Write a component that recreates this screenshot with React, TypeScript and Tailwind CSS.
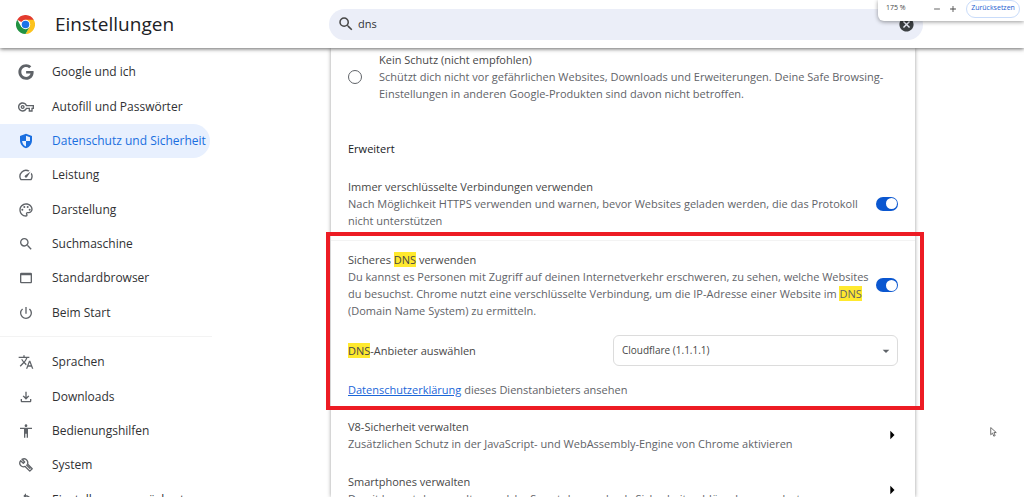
import type { ComponentType, ReactNode } from "react";
import clsx from "clsx";
import { FaGoogle } from "react-icons/fa";
import {
  MdAccessibility,
  MdAdd,
  MdArrowDropDown,
  MdArrowRight,
  MdCancel,
  MdOutlineFileDownload,
  MdOutlinePalette,
  MdOutlineSpeed,
  MdOutlineVpnKey,
  MdPowerSettingsNew,
  MdRemove,
  MdRestartAlt,
  MdSearch,
  MdTranslate,
  MdWebAsset,
} from "react-icons/md";

type IconProps = { className?: string };

interface NavItem {
  label: string;
  icon: ComponentType<IconProps>;
  active?: boolean;
}

/** Shield split into quarters, two of them hollow. */
function ShieldIcon({ className }: IconProps) {
  return (
    <svg viewBox="0 0 24 24" fill="currentColor" className={className} aria-hidden="true">
      <path
        fillRule="evenodd"
        d="M12 1 3 4.500V11c0 5.600 3.800 10.700 9 12 5.200-1.300 9-6.400 9-12V4.500L12 1Zm0 3 6 2.300V12h-6V4ZM12 12v8.300C8.800 19.200 6.600 16 6.100 12H12Z"
      />
    </svg>
  );
}

/** Open-ended spanner with a hollow handle. */
function WrenchIcon({ className }: IconProps) {
  return (
    <svg
      viewBox="0 0 24 24"
      fill="none"
      stroke="currentColor"
      strokeWidth="2"
      strokeLinejoin="round"
      className={className}
      aria-hidden="true"
    >
      <path d="M4 5.500 8 9.500 10 7.500 6 3.500C9 2 12 3 13.500 5c1.300 1.800 1.500 3.800.8 5.600l7 7-3.600 3.600-7-7C8.500 15 6 14.800 4.300 13 2.300 11 2.200 8 4 5.500Z" />
      <path d="m12.500 11.500 6 6" />
    </svg>
  );
}

function ChromeLogo({ className }: IconProps) {
  return (
    <svg viewBox="0 0 48 48" className={className} aria-hidden="true">
      <path fill="#e33b2e" d="M24 24 3.200 12A24 24 0 0 1 44.800 12Z" />
      <path fill="#fcc31e" d="M24 12h20.800A24 24 0 0 1 24 48l10.400-18Z" />
      <path fill="#229342" d="M13.600 30 3.200 12A24 24 0 0 0 24 48l10.400-18Z" />
      <circle cx="24" cy="24" r="12" fill="#fff" />
      <circle cx="24" cy="24" r="9.500" fill="#1a73e8" />
    </svg>
  );
}

const PRIMARY: NavItem[] = [
  { label: "Google und ich", icon: FaGoogle },
  { label: "Autofill und Passwörter", icon: MdOutlineVpnKey },
  { label: "Datenschutz und Sicherheit", icon: ShieldIcon, active: true },
  { label: "Leistung", icon: MdOutlineSpeed },
  { label: "Darstellung", icon: MdOutlinePalette },
  { label: "Suchmaschine", icon: MdSearch },
  { label: "Standardbrowser", icon: MdWebAsset },
  { label: "Beim Start", icon: MdPowerSettingsNew },
];

const SECONDARY: NavItem[] = [
  { label: "Sprachen", icon: MdTranslate },
  { label: "Downloads", icon: MdOutlineFileDownload },
  { label: "Bedienungshilfen", icon: MdAccessibility },
  { label: "System", icon: WrenchIcon },
  { label: "Einstellungen zurücksetzen", icon: MdRestartAlt },
];

function NavList({ items, className }: { items: NavItem[]; className?: string }) {
  return (
    <ul className={clsx("grid auto-rows-fr grid-cols-1", className)}>
      {items.map(({ label, icon: Icon, active }) => (
        <li key={label} className="min-h-0">
          <a
            href="#"
            aria-current={active ? "page" : undefined}
            className={clsx(
              "flex h-full items-center gap-4.5 rounded-r-full pl-[18px] text-[12px] font-medium whitespace-nowrap",
              active ? "bg-[#e8f0fe] text-[#1a6fe0]" : "text-[#303134]",
            )}
          >
            <Icon className={clsx("size-4 shrink-0", !active && "text-[#5f6368]")} />
            {label}
          </a>
        </li>
      ))}
    </ul>
  );
}

function Mark({ children }: { children: ReactNode }) {
  return <mark className="bg-[#ffe92e] text-inherit">{children}</mark>;
}

function Toggle({ id }: { id: string }) {
  return (
    <input
      id={id}
      type="checkbox"
      role="switch"
      defaultChecked
      className="flex h-3.5 w-[22px] shrink-0 appearance-none items-center justify-start rounded-full bg-gray-400 px-px before:size-[11px] before:rounded-full before:bg-white checked:justify-end checked:bg-[#0b57d0]"
    />
  );
}

function LinkRow({ title, text }: { title: string; text: string }) {
  return (
    <button type="button" className="flex w-full items-center justify-between px-[17px] text-left">
      <span>
        <span className="block text-[#474747]">{title}</span>
        <span className="block">{text}</span>
      </span>
      <MdArrowRight className="-mr-1 size-5 shrink-0 text-black" />
    </button>
  );
}

function ZoomBubble() {
  return (
    <div className="absolute top-0 right-0 z-20 flex h-[21px] w-[146px] items-center rounded-bl-md bg-white pr-1 pb-1 pl-2 text-[7px] text-[#474747] shadow-[0_1px_4px_rgba(0,0,0,0.4)]">
      <span className="flex-1">175 %</span>
      <button type="button" aria-label="Verkleinern" className="mr-1.5">
        <MdRemove className="size-2.5" />
      </button>
      <button type="button" aria-label="Vergrößern" className="mr-2">
        <MdAdd className="size-2.5" />
      </button>
      <button
        type="button"
        className="h-[18px] w-[54px] rounded-full border border-[#c9dcfa] font-medium text-[#2460d0]"
      >
        Zurücksetzen
      </button>
    </div>
  );
}

function Header() {
  return (
    <header className="relative z-10 flex h-12 shrink-0 items-center bg-white shadow-[0_1px_4px_rgba(0,0,0,0.6)]">
      <div className="flex w-[329px] shrink-0 items-center gap-5 pl-4">
        <ChromeLogo className="size-[19px]" />
        <h1 className="text-[19px] font-medium text-[#202124]">Einstellungen</h1>
      </div>
      <div className="mr-[101px] flex h-[31px] flex-1 items-center rounded-full bg-[#ebeef8] pr-2 pl-2">
        <MdSearch className="size-4.5 text-[#474747]" />
        <input
          type="text"
          aria-label="In Einstellungen suchen"
          defaultValue="dns"
          className="ml-[3px] min-w-0 flex-1 text-[11px] font-medium text-[#303134] outline-none"
        />
        <button type="button" aria-label="Suche löschen">
          <MdCancel className="size-[17px] text-[#3c4043]" />
        </button>
      </div>
      <ZoomBubble />
    </header>
  );
}

function SecureDns() {
  return (
    <section className="relative border-t border-[#f3f3f3] px-[17px] pt-2.5">
      <div className="flex items-center justify-between">
        <label htmlFor="secure-dns">
          <span className="block text-[#474747]">
            Sicheres <Mark>DNS</Mark> verwenden
          </span>
          Du kannst es Personen mit Zugriff auf deinen Internetverkehr erschweren, zu sehen, welche Websites
          du besuchst. Chrome nutzt eine verschlüsselte Verbindung, um die IP-Adresse einer Website im{" "}
          <Mark>DNS</Mark> (Domain Name System) zu ermitteln.
        </label>
        <Toggle id="secure-dns" />
      </div>
      <div className="mt-4 flex items-center justify-between">
        <label htmlFor="dns-provider" className="text-[#474747]">
          <Mark>DNS</Mark>-Anbieter auswählen
        </label>
        <div className="relative w-[285px]">
          <select
            id="dns-provider"
            className="block h-[31px] w-full appearance-none rounded-md border border-[#dcdcdc] bg-white pl-2 text-[10px] text-[#474747]"
          >
            <option>Cloudflare (1.1.1.1)</option>
          </select>
          <MdArrowDropDown className="pointer-events-none absolute top-2 right-1 size-4 text-[#5f6368]" />
        </div>
      </div>
      <p className="mt-[15px]">
        <a href="#" className="text-[#1a66d8] underline">
          Datenschutzerklärung
        </a>{" "}
        dieses Dienstanbieters ansehen
      </p>
      <div className="pointer-events-none absolute -top-[9px] -right-[9px] -bottom-3 -left-[5px] border-4 border-[#ed1c24]" />
    </section>
  );
}

export default function App() {
  return (
    <div className="relative flex h-screen flex-col overflow-hidden bg-white font-['Open_Sans',sans-serif]">
      <Header />
      <div className="flex min-h-0 flex-1">
        <nav aria-label="Einstellungen" className="w-[331px] shrink-0 pt-[7px]">
          <NavList items={PRIMARY} className="h-[275px] w-[210px]" />
          <hr className="mt-1.5 mb-2 w-[212px] border-[#f3f3f3]" />
          <NavList items={SECONDARY} className="h-[172px] w-[210px]" />
        </nav>
        <main className="mr-[109px] min-w-0 flex-1 pt-[3px] text-[11px] leading-[17px] text-[#5f6368] shadow-[0_0_4px_rgba(0,0,0,0.4)]">
          <label className="flex items-center gap-[17px] px-[17px]">
            <input
              type="radio"
              name="safe-browsing"
              className="size-[14px] shrink-0 appearance-none rounded-full border border-[#5f6368]"
            />
            <span>
              <span className="block text-[#474747]">Kein Schutz (nicht empfohlen)</span>
              Schützt dich nicht vor gefährlichen Websites, Downloads und Erweiterungen. Deine Safe
              Browsing-Einstellungen in anderen Google-Produkten sind davon nicht betroffen.
            </span>
          </label>
          <h2 className="mt-[38px] px-[17px] font-medium text-[#202124]">Erweitert</h2>
          <div className="mt-[21px] mb-[11px] flex items-center justify-between px-[17px]">
            <label htmlFor="https-only">
              <span className="block text-[#474747]">Immer verschlüsselte Verbindungen verwenden</span>
              Nach Möglichkeit HTTPS verwenden und warnen, bevor Websites geladen werden, die das Protokoll
              nicht unterstützen
            </label>
            <Toggle id="https-only" />
          </div>
          <SecureDns />
          <div className="mt-5 flex flex-col gap-[21px]">
            <LinkRow
              title="V8-Sicherheit verwalten"
              text="Zusätzlichen Schutz in der JavaScript- und WebAssembly-Engine von Chrome aktivieren"
            />
            <LinkRow
              title="Smartphones verwalten"
              text="Damit kannst du verwalten, welche Smartphones du als Sicherheitsschlüssel verwendest"
            />
          </div>
        </main>
      </div>
      {/* Mouse pointer */}
      <svg viewBox="0 0 12 18" className="absolute top-[427px] left-[990px] h-2.5 w-[7px]" aria-hidden="true">
        <path d="M1 1v13l3.200-3 2.300 5.500 2.500-1L6.800 10H11Z" fill="#fff" stroke="#555" strokeWidth="1.500" />
      </svg>
    </div>
  );
}
